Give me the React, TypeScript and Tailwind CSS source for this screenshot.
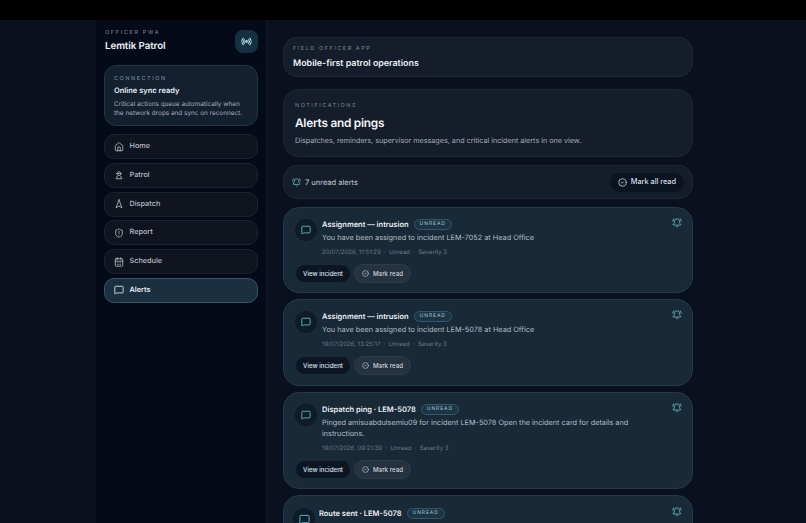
import {
  BellRing,
  CalendarDays,
  CircleCheck,
  House,
  MessageSquare,
  Navigation2,
  Radio,
  ShieldAlert,
} from 'lucide-react';

// Officer bust with cap: lucide has no close match for the Patrol icon
function OfficerIcon({ className }: { className?: string }) {
  return (
    <svg
      viewBox="0 0 24 24"
      fill="none"
      stroke="currentColor"
      strokeWidth="2"
      strokeLinecap="round"
      strokeLinejoin="round"
      className={className}
    >
      <path d="M7 8.5 12 3l5 5.5" />
      <path d="M7 8.5h10" />
      <path d="M7.5 9a4.5 4.5 0 0 0 9 0" />
      <path d="M8 15 5 21h14l-3-6" />
    </svg>
  );
}

const NAV_ITEMS = [
  { label: 'Home', icon: House },
  { label: 'Patrol', icon: OfficerIcon },
  { label: 'Dispatch', icon: Navigation2 },
  { label: 'Report', icon: ShieldAlert },
  { label: 'Schedule', icon: CalendarDays },
  { label: 'Alerts', icon: MessageSquare, active: true },
];

const ALERTS = [
  {
    title: 'Assignment — intrusion',
    body: 'You have been assigned to incident LEM-7052 at Head Office',
    date: '20/07/2026, 11:51:29',
  },
  {
    title: 'Assignment — intrusion',
    body: 'You have been assigned to incident LEM-5078 at Head Office',
    date: '19/07/2026, 13:25:17',
  },
  {
    title: 'Dispatch ping · LEM-5078',
    body: 'Pinged amisuabdulsemiu09 for incident LEM-5078 Open the incident card for details and instructions.',
    date: '19/07/2026, 09:21:39',
  },
];

function UnreadPill() {
  return (
    <span className="rounded-full border border-[#35566a] bg-[#1b3544] px-[5px] py-[1px] text-[5px] leading-[7px] tracking-[0.18em] text-[#a5c4d2]">
      UNREAD
    </span>
  );
}

function AlertCard({ title, body, date }: { title: string; body: string; date: string }) {
  return (
    <div className="relative mb-[6px] rounded-[16px] border border-[#243a49] bg-[#182937] pt-[11px] pr-[12px] pb-[9.4px] pl-[11px]">
      <BellRing className="absolute top-[10px] right-[10px] size-[10px] text-[#6cc0ca]" />
      <div className="flex gap-[5px]">
        <div className="flex size-[22px] shrink-0 items-center justify-center rounded-full bg-[#0e1b28]">
          <MessageSquare className="size-[10px] text-[#6cc0ca]" />
        </div>
        <div className="min-w-0 pr-[28px]">
          <div className="flex items-center gap-[5px]">
            <span className="text-[7.5px] leading-[11px] font-semibold text-[#e8edf2]">{title}</span>
            <UnreadPill />
          </div>
          <p className="mt-[2px] text-[7.3px] leading-[11px] text-[#b3bdc7]">{body}</p>
          <p className="mt-[5px] text-[6px] leading-[9px] text-[#6c7a87]">
            {date} &nbsp;·&nbsp; Unread &nbsp;·&nbsp; Severity 3
          </p>
        </div>
      </div>
      <div className="mt-[7px] flex items-center gap-[4px] pl-px">
        <button className="h-[17px] rounded-full bg-[#0c1523] px-[7px] text-[6.2px] font-medium text-[#dce3ea]">
          View incident
        </button>
        <button className="flex h-[19px] items-center gap-[4px] rounded-full border border-[#2d3d4a] bg-[#253340] px-[7px] text-[6.2px] font-medium text-[#c9d1d9]">
          <CircleCheck className="size-[7px]" />
          Mark read
        </button>
      </div>
    </div>
  );
}

export default function App() {
  return (
    <div className="flex h-[523px] w-[806px] flex-col overflow-hidden bg-black font-['Inter',sans-serif] antialiased [text-rendering:geometricPrecision]">
      <div className="h-[20px] shrink-0 bg-black" />
      <div className="flex min-h-0 flex-1 bg-[#0a101d]">
        <aside className="ml-[96px] w-[171px] shrink-0 border-r border-[#121826] bg-[#050a18] pt-[9px] pr-[8px] pl-[8px]">
          <div className="flex items-start justify-between">
            <div>
              <p className="pl-px text-[5.5px] leading-[8px] tracking-[0.3em] text-[#6f8699]">OFFICER PWA</p>
              <h1 className="mt-[2px] pl-px text-[9.8px] leading-[16px] font-semibold tracking-[-0.01em] text-[#eef2f6]">Lemtik Patrol</h1>
            </div>
            <div className="mt-px flex size-[23px] items-center justify-center rounded-[8px] bg-[#17303f]">
              <Radio className="size-[11px] text-[#a6d8e6]" strokeWidth={2.5} />
            </div>
          </div>
          <div className="mt-[10px] h-[61px] rounded-[12px] border border-[#1f3644] bg-[#122030] px-[9px] pt-[9px]">
            <p className="text-[5.5px] leading-[8px] tracking-[0.28em] text-[#7d93a3]">CONNECTION</p>
            <p className="mt-[2px] text-[7.5px] leading-[12px] font-semibold text-[#e8edf2]">Online sync ready</p>
            <p className="mt-[3px] text-[6.4px] leading-[9px] text-[#a3afba]">
              Critical actions queue automatically when the network drops and sync on reconnect.
            </p>
          </div>
          <nav className="mt-[8px] flex flex-col gap-[3.75px]">
            {NAV_ITEMS.map(({ label, icon: Icon, active }) => (
              <div
                key={label}
                className={
                  active
                    ? 'flex h-[25px] items-center gap-[6px] rounded-[10px] border border-[#33566a] bg-[#1a2f40] px-[8.5px] text-[#e8edf2]'
                    : 'flex h-[25px] items-center gap-[6px] rounded-[10px] border border-[#1c2230] bg-[#10141f] px-[8.5px] text-[#b6bec8]'
                }
              >
                <Icon className="size-[10px] shrink-0" />
                <span className={active ? 'text-[7.3px] font-semibold' : 'text-[7.3px] font-medium'}>{label}</span>
              </div>
            ))}
          </nav>
        </aside>
        <main className="w-[426px] shrink-0 pt-[17px] pl-[16px]">
          <div className="h-[40px] w-[410px] rounded-[14px] border border-[#1f2835] bg-[#151c2a] px-[9px] pt-[6.5px]">
            <p className="text-[5.5px] leading-[8px] tracking-[0.28em] text-[#7b8592]">FIELD OFFICER APP</p>
            <p className="mt-[4px] text-[8.9px] leading-[14px] font-semibold text-[#eef2f6]">Mobile-first patrol operations</p>
          </div>
          <div className="mt-[12px] h-[68px] w-[410px] rounded-[16px] border border-[#1f2835] bg-[#151c2a] px-[11px] pt-[11.5px]">
            <p className="text-[5.5px] leading-[8px] tracking-[0.28em] text-[#7b8592]">NOTIFICATIONS</p>
            <h2 className="mt-[4.5px] text-[11.8px] leading-[18px] font-semibold tracking-[-0.02em] text-[#f2f5f8]">Alerts and pings</h2>
            <p className="mt-[3px] text-[7.2px] leading-[11px] text-[#a3adb8]">
              Dispatches, reminders, supervisor messages, and critical incident alerts in one view.
            </p>
          </div>
          <div className="mt-[8px] flex h-[34px] w-[410px] items-center justify-between rounded-[14px] border border-[#1f2835] bg-[#151c2a] pt-px pr-[8px] pl-[8px]">
            <div className="flex items-center gap-[4px]">
              <BellRing className="size-[9px] text-[#6cc0ca]" />
              <span className="text-[7.5px] text-[#c4ccd5]">7 unread alerts</span>
            </div>
            <button className="flex h-[19px] items-center gap-[4px] rounded-full bg-[#0c1320] px-[8px] text-[7.3px] font-medium text-[#d6dde4]">
              <CircleCheck className="size-[9px]" />
              Mark all read
            </button>
          </div>
          <div className="mt-[8px] w-[410px]">
            {ALERTS.map((a) => (
              <AlertCard key={a.date} {...a} />
            ))}
            <div className="relative rounded-[16px] border border-[#243a49] bg-[#182937] pt-[12px] pr-[12px] pb-[11px] pl-[9px]">
              <BellRing className="absolute top-[11px] right-[10px] size-[10px] text-[#6cc0ca]" />
              <div className="flex gap-[4px]">
                <div className="flex size-[22px] shrink-0 items-center justify-center rounded-full bg-[#0e1b28]">
                  <MessageSquare className="size-[11px] text-[#6cc0ca]" />
                </div>
                <div className="min-w-0 pr-[28px]">
                  <div className="flex items-center gap-[5px]">
                    <span className="text-[7.5px] leading-[11px] font-semibold text-[#e8edf2]">Route sent · LEM-5078</span>
                    <UnreadPill />
                  </div>
                  <p className="mt-[3px] text-[7.3px] leading-[11px] text-[#b3bdc7]">
                    Suggested route sent to amisuabdulsemiu09 for incident LEM-5078. Open the incident card for details.
                  </p>
                </div>
              </div>
            </div>
          </div>
        </main>
      </div>
    </div>
  );
}
